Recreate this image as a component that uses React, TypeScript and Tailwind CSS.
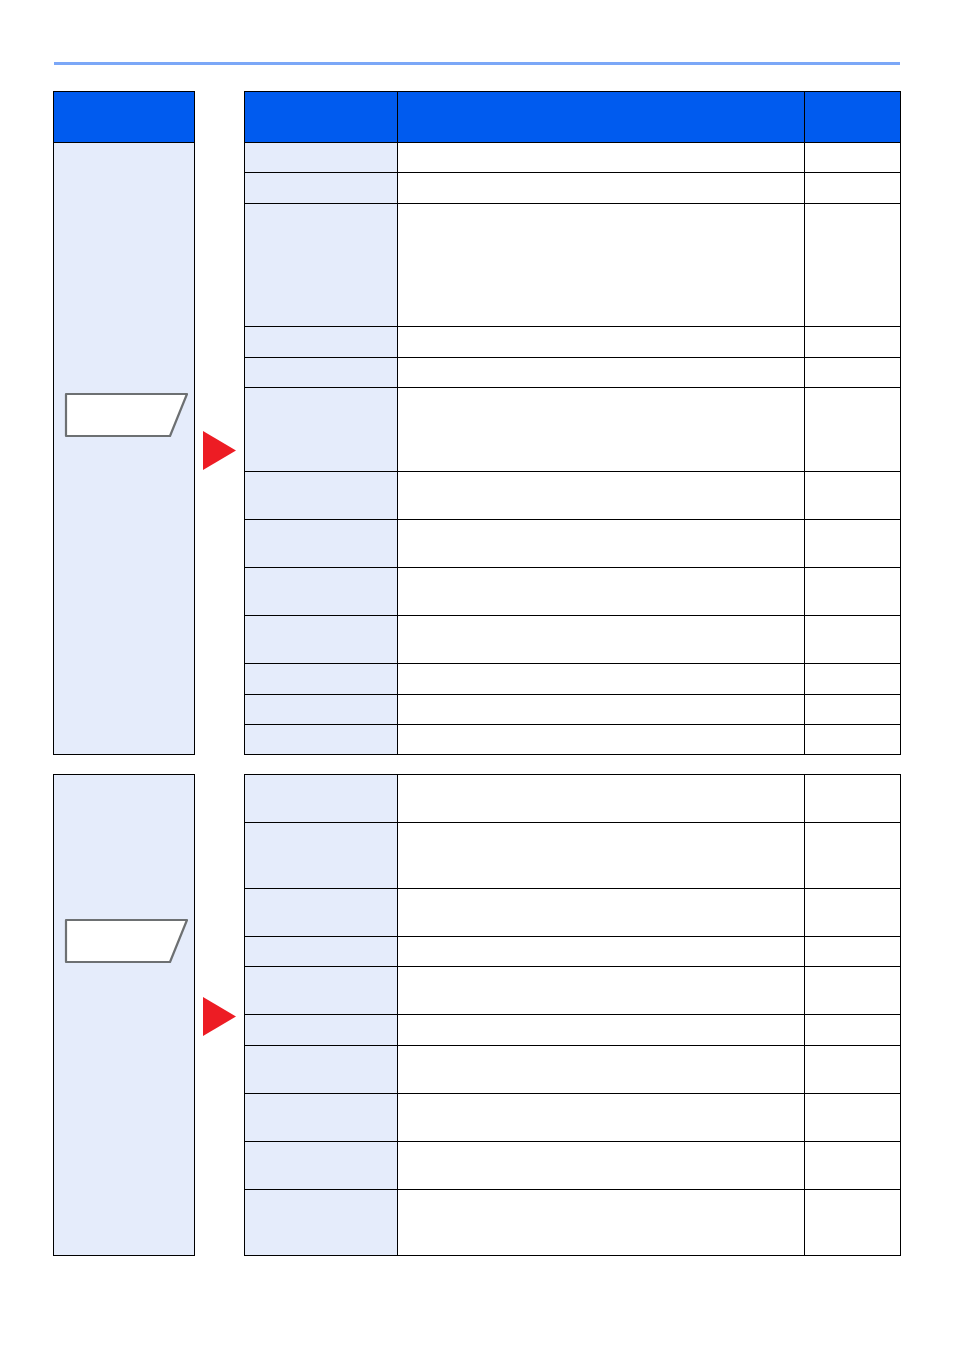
const TOP_ROWS = [30, 31, 123, 31, 30, 84, 48, 48, 48, 48, 31, 30, 30];
const BOTTOM_ROWS = [48, 66, 48, 30, 48, 31, 48, 48, 48, 66];

function KeyShape() {
  return (
    <svg width="126" height="46" viewBox="0 0 126 46" className="block">
      <polygon points="2,2 123,2 106,44 2,44" fill="#ffffff" stroke="#6d7072" strokeWidth="2.2" strokeLinejoin="round" />
    </svg>
  );
}

function Arrow() {
  return (
    <svg width="33" height="39" viewBox="0 0 33 39" className="block">
      <polygon points="0,0 33,19.5 0,39" fill="#ed1c24" />
    </svg>
  );
}

function Table({ rows, header }: { rows: number[]; header?: boolean }) {
  return (
    <div className="w-[657px] border-l border-t border-r border-black">
      {header && (
        <div className="flex h-[51px] bg-[#005bef] border-b border-black">
          <div className="w-[153px] border-r border-black" />
          <div className="w-[407px] border-r border-black" />
          <div className="flex-1" />
        </div>
      )}
      {rows.map((h, i) => (
        <div key={i} className="flex border-b border-black" style={{ height: h }}>
          <div className="w-[153px] bg-[#e5ecfb] border-r border-black" />
          <div className="w-[407px] bg-white border-r border-black" />
          <div className="flex-1 bg-white" />
        </div>
      ))}
    </div>
  );
}

function Section({ rows, header, shapeTop, arrowTop }: { rows: number[]; header?: boolean; shapeTop: string; arrowTop: string }) {
  return (
    <div className="flex">
      <div className="w-[142px] flex flex-col border border-black bg-[#e5ecfb]">
        {header && <div className="h-[51px] bg-[#005bef] border-b border-black" />}
        <div className={`pl-[10px] ${shapeTop}`}>
          <KeyShape />
        </div>
      </div>
      <div className={`w-[49px] pl-[8px] ${arrowTop}`}>
        <Arrow />
      </div>
      <Table rows={rows} header={header} />
    </div>
  );
}

export default function App() {
  return (
    <div className="w-[954px] h-[1350px] bg-white pt-[62px] pl-[53px]">
      <div className="ml-[1px] w-[846px] h-[3px] bg-[#7ba7f7]" />
      <div className="mt-[26px]">
        <Section rows={TOP_ROWS} header shapeTop="pt-[249px]" arrowTop="pt-[340px]" />
      </div>
      <div className="mt-[19px]">
        <Section rows={BOTTOM_ROWS} shapeTop="pt-[143px]" arrowTop="pt-[223px]" />
      </div>
    </div>
  );
}
